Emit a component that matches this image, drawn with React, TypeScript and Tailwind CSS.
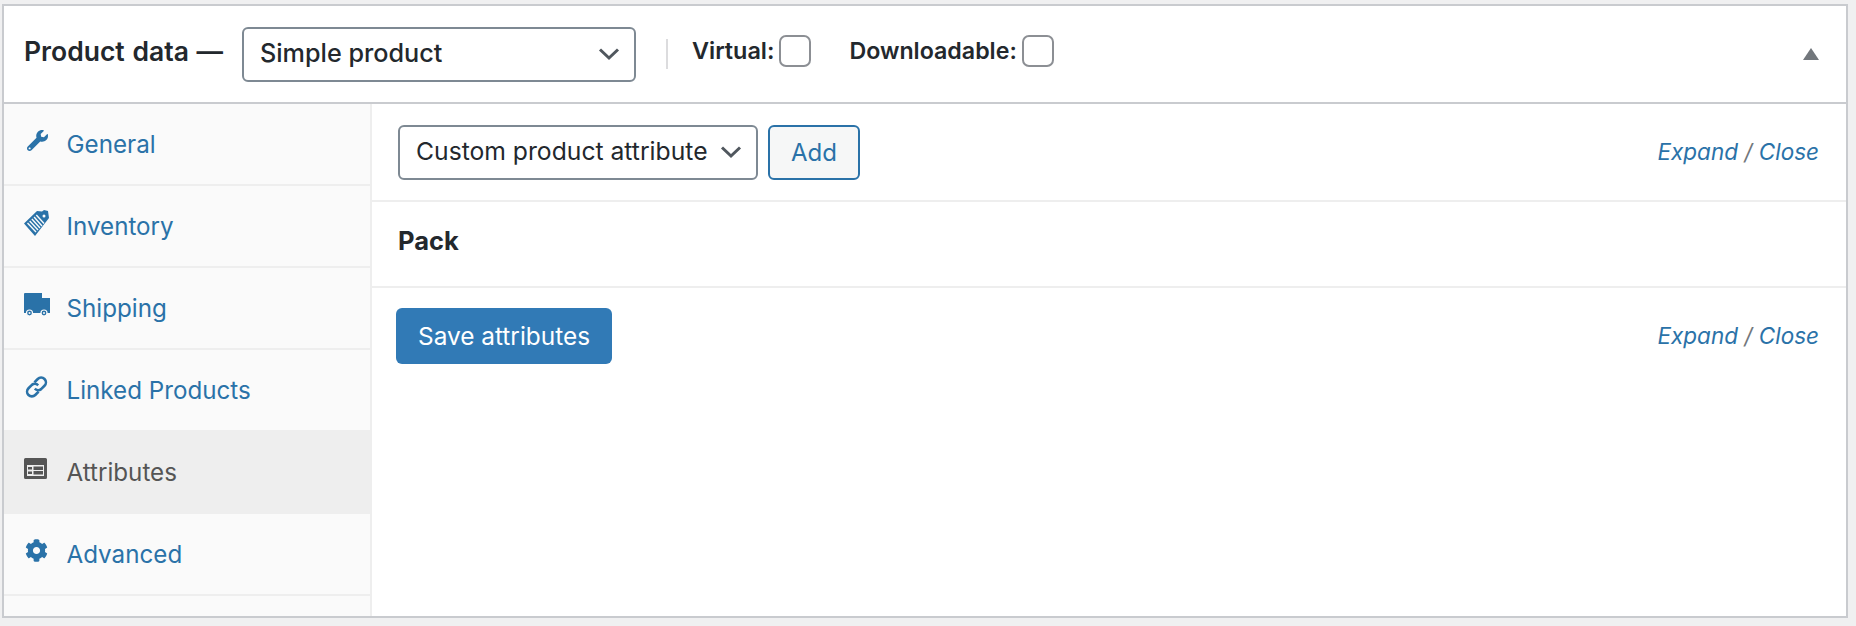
import { FaCog, FaWrench } from "react-icons/fa";
import type { ReactNode } from "react";

function TagIcon() {
  return (
    <svg width="25" height="26" viewBox="0 0 25 26" fill="currentColor">
      <path d="M0 13.5 L13 1 L18 1.5 L20 0 L24 1 L25 8 L11 26 Z" />
      <g stroke="#fafafa" strokeWidth="1.4">
        <path d="M3.5 13 L12 22" />
        <path d="M5.7 11 L14 20" />
        <path d="M7.9 9 L16 18" />
        <path d="M10.1 7 L18 16" />
        <path d="M12.3 5 L20 13.5" />
      </g>
      <circle cx="20" cy="6" r="1.5" fill="#fafafa" />
    </svg>
  );
}

function TruckIcon() {
  return (
    <svg width="26" height="23" viewBox="0 0 26 23" fill="currentColor">
      <path d="M1 0 H18 V5 H26 V20 H0 V1 Q0 0 1 0 Z" />
      <circle cx="5.5" cy="20" r="3" fill="currentColor" stroke="#fafafa" strokeWidth="1.2" />
      <circle cx="20" cy="20" r="3" fill="currentColor" stroke="#fafafa" strokeWidth="1.2" />
      <circle cx="5.5" cy="20" r="1" fill="#fafafa" />
      <circle cx="20" cy="20" r="1" fill="#fafafa" />
    </svg>
  );
}

function LinkIcon() {
  return (
    <svg width="25" height="24" viewBox="0 0 21 20" fill="none" stroke="currentColor" strokeWidth="2.2" overflow="visible">
      <g transform="rotate(-45 10.5 10)">
        <path d="M9 14 H5 A4 4 0 0 1 5 6 H9 A4 4 0 0 1 12.5 10" />
        <path d="M12 6 H16 A4 4 0 0 1 16 14 H12 A4 4 0 0 1 8.5 10" />
      </g>
    </svg>
  );
}

function AttributesIcon() {
  return (
    <svg width="23" height="21" viewBox="0 0 23 21" fill="currentColor">
      <path
        fillRule="evenodd"
        d="M1.5 0 H21.5 Q23 0 23 1.5 V19.5 Q23 21 21.5 21 H1.5 Q0 21 0 19.5 V1.5 Q0 0 1.5 0 Z M3 7 V18 H20 V7 Z"
      />
      <rect x="4" y="9" width="4" height="2.5" />
      <rect x="4" y="13.5" width="4" height="2.5" />
      <rect x="9.5" y="8.5" width="9.5" height="3.5" />
      <rect x="9.5" y="13" width="9.5" height="3.5" />
    </svg>
  );
}

function Chevron() {
  return (
    <svg width="22" height="14" viewBox="0 0 22 14" fill="none" stroke="#50575e" strokeWidth="3">
      <path d="M2 2.5 L11 11 L20 2.5" />
    </svg>
  );
}

function Checkbox() {
  return <span className="block h-[32px] w-[32px] rounded-[7px] border-2 border-[#8c8f94] bg-white" />;
}

function ExpandClose() {
  return (
    <span className="text-[22.5px] italic text-[#72777c]">
      <a className="text-[#2a72a8]">Expand</a> / <a className="text-[#2a72a8]">Close</a>
    </span>
  );
}

type Tab = { label: string; icon: ReactNode; active?: boolean };

const tabs: Tab[] = [
  { label: "General", icon: <FaWrench size={21} className="ml-[3px]" /> },
  { label: "Inventory", icon: <TagIcon /> },
  { label: "Shipping", icon: <TruckIcon /> },
  { label: "Linked Products", icon: <LinkIcon /> },
  { label: "Attributes", icon: <AttributesIcon />, active: true },
  { label: "Advanced", icon: <FaCog size={23} className="ml-px" /> },
];

export default function App() {
  return (
    <div className="h-[626px] w-[1856px] bg-[#f0f0f1] pl-[2px] pt-[4px] font-['Inter',sans-serif] text-[#23282d]">
      <div className="flex h-[614px] w-[1846px] flex-col border-2 border-[#c9cbcf] bg-white">
        <div className="flex h-[98px] shrink-0 items-center border-b-2 border-[#c9cbcf] pl-[20px] pr-[27px]">
          <h2 className="mt-[-4px] w-[218px] text-[26.5px] font-semibold [word-spacing:1px]">Product data —</h2>
          <div className="flex h-[55px] w-[394px] items-center justify-between rounded-[6px] border-2 border-[#7e8993] pl-[16px] pr-[14px] text-[25.2px] font-medium">
            <span>Simple product</span>
            <Chevron />
          </div>
          <span className="ml-[30px] h-[30px] w-[2px] bg-[#dcdcde]" />
          <label className="ml-[24px] mt-[-6px] flex items-center gap-[5px] text-[23.4px] font-semibold">
            Virtual:
            <Checkbox />
          </label>
          <label className="ml-[38px] mt-[-6px] flex items-center gap-[5px] text-[23.2px] font-semibold">
            Downloadable:
            <Checkbox />
          </label>
          <span className="ml-auto h-0 w-0 border-x-[8px] border-b-[12px] border-x-transparent border-b-[#72777c]" />
        </div>
        <div className="flex min-h-0 flex-1">
          <ul className="w-[366px] shrink-0 bg-[#fafafa]">
            {tabs.map((tab) => (
              <li
                key={tab.label}
                className={`flex h-[82px] items-center border-b-2 border-[#eeeeee] pl-[20px] pt-[2px] text-[24.2px] ${
                  tab.active ? "bg-[#eeeeee] text-[#555555]" : "text-[#2a72a8]"
                }`}
              >
                <span className="mt-[-9px] w-[42.5px] shrink-0">{tab.icon}</span>
                {tab.label}
              </li>
            ))}
          </ul>
          <div className="min-w-0 flex-1 border-l-2 border-[#eeeeee]">
            <div className="flex h-[98px] items-center border-b-2 border-[#eeeeee] pl-[26px] pr-[27px]">
              <div className="flex h-[55px] w-[360px] items-center justify-between rounded-[6px] border-2 border-[#7e8993] pl-[16px] pr-[14px] text-[24.7px]">
                <span>Custom product attribute</span>
                <Chevron />
              </div>
              <button className="ml-[10px] h-[55px] w-[92px] rounded-[6px] border-2 border-[#2a72a8] bg-[#f6f7f7] pt-[2px] text-[24px] text-[#2a72a8]">
                Add
              </button>
              <span className="ml-auto">
                <ExpandClose />
              </span>
            </div>
            <div className="flex h-[86px] items-center border-b-2 border-[#eeeeee] pb-[6px] pl-[26px] text-[25.5px] font-bold">
              Pack
            </div>
            <div className="flex items-center pl-[24px] pr-[27px] pt-[20px]">
              <button className="h-[56px] w-[216px] rounded-[6px] bg-[#317ab6] text-[24.4px] text-white">
                Save attributes
              </button>
              <span className="ml-auto">
                <ExpandClose />
              </span>
            </div>
          </div>
        </div>
      </div>
    </div>
  );
}
